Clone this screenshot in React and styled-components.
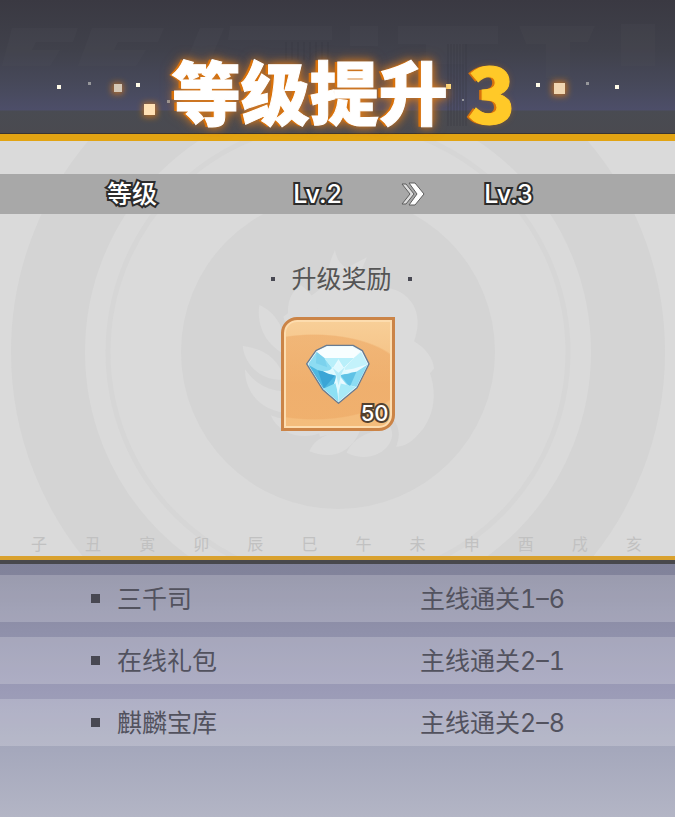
import React from 'react';
import styled, { createGlobalStyle } from 'styled-components';

const GlobalStyle = createGlobalStyle`
  * {
    box-sizing: border-box;
  }
  body {
    margin: 0;
    background: #b3b5c5;
    font-family: Inter, 'Noto Sans CJK SC', sans-serif;
  }
  h1, h2, p, ul {
    margin: 0;
    padding: 0;
    font-weight: 400;
    list-style: none;
  }
`

const Page = styled.main`
  display: flex;
  flex-direction: column;
  min-height: 100vh;
`

const Backdrop = styled.svg`
  position: absolute;
  inset: 0;
  width: 100%;
  height: 100%;
`

const Header = styled.header`
  position: relative;
  height: 141px;
  border-bottom: 7px solid #e2a413;
  box-shadow: inset 0 -1px 0 #3a3530;
  background: linear-gradient(#3a3942 0, #40414b 50px, #484a5d 90px, #4d4e69 110px, #494b52 111px, #4a4a50 134px);
`

const Title = styled.h1`
  position: relative;
  display: flex;
  justify-content: center;
  align-items: center;
  gap: 20px;
  padding-top: 50px;
  padding-left: 12px;
  font-family: 'Noto Sans CJK SC', sans-serif;
  font-size: 69px;
  font-weight: 900;
  line-height: 80px;
  color: #fff;
  -webkit-text-stroke: 1px #fff;
  text-shadow: -3px 0 0 #d8720c, 0 0 8px #e07d1c, 0 0 14px rgba(226, 126, 20, 0.7);
`

const TitleLevel = styled.span`
  font-size: 78px;
  color: #ffc928;
  -webkit-text-stroke: 1px #ffc928;
  text-shadow: -3px 0 0 #d8720c, 0 0 6px rgba(216, 114, 12, 0.4);
`

const Panel = styled.section`
  position: relative;
  padding: 33px 0 2px;
  background: #dadada;
  border-bottom: 4px solid #d9a12e;
`

const LevelBar = styled.div`
  position: relative;
  display: grid;
  grid-template-columns: 264fr 107fr 84fr 107fr 113fr;
  align-items: center;
  justify-items: center;
  height: 40px;
  background: #a8a8a8;
`

const Outlined = styled.span`
  font-size: ${(props) => props.$size || 25}px;
  font-weight: 500;
  line-height: 30px;
  color: #fff;
  -webkit-text-stroke: 4px ${(props) => props.$stroke || '#2c2c2c'};
  paint-order: stroke fill;
`

const RewardTitle = styled.h2`
  position: relative;
  display: flex;
  justify-content: center;
  align-items: center;
  gap: 16px;
  margin-top: 50px;
  padding-left: 8px;
  font-size: 25px;
  line-height: 30px;
  color: #555;
`

const Square = styled.span`
  width: ${(props) => props.$size}px;
  height: ${(props) => props.$size}px;
  background: #484852;
`

const RewardBox = styled.div`
  position: relative;
  display: flex;
  align-items: center;
  justify-content: center;
  width: 114px;
  height: 114px;
  margin: 23px auto 0;
  border: 3px solid #cb8447;
  border-radius: 16px 0 16px 0;
  background:
    radial-gradient(ellipse 92px 43px at 30px 57px, rgba(236, 166, 98, 0.55) 97%, transparent 100%),
    linear-gradient(#f8cf98, #f3bb7c 60%, #f4bd7c);
  box-shadow: inset 0 0 0 2px #fddcae;
`

const Count = styled.span`
  position: absolute;
  right: 3px;
  bottom: 0;
`

const Branches = styled.ul`
  position: relative;
  display: grid;
  grid-template-columns: repeat(12, 1fr);
  margin-top: 103px;
  padding: 0 14px 0 12px;
  font-size: 16px;
  line-height: 20px;
  text-align: center;
  color: #c1c1c1;
`

const Unlocks = styled.ul`
  flex: 1;
  display: flex;
  flex-direction: column;
  gap: 15px;
  padding: 11px 0 70px;
  border-top: 4px solid #48484c;
  background: linear-gradient(#80829a 0, #82839b 11px, #8f90aa 66px, #9b9bb7 128px, #a5a8bc 186px, #b3b5c5 253px);
`

const UnlockRow = styled.li`
  display: grid;
  grid-template-columns: 26px 303fr 255fr;
  align-items: center;
  height: 47px;
  padding-left: 91px;
  font-size: 25px;
  font-variant-numeric: tabular-nums;
  line-height: 30px;
  color: #52525e;
  background: rgba(255, 255, 255, 0.2);
`

const branches = ['子', '丑', '寅', '卯', '辰', '巳', '午', '未', '申', '酉', '戌', '亥'];

const unlocks = [
  { name: '三千司', condition: '主线通关1–6' },
  { name: '在线礼包', condition: '主线通关2–1' },
  { name: '麒麟宝库', condition: '主线通关2–8' }
];

const HeaderArt = () => (
  <Backdrop viewBox="0 0 675 134" preserveAspectRatio="xMidYMid slice" aria-hidden="true">
    <defs>
      <filter id="spark" x="-100%" y="-100%" width="300%" height="300%">
        <feGaussianBlur stdDeviation="3" />
      </filter>
    </defs>
    {/* worn lettering behind the title */}
    <g fill="#55565f" opacity="0.14">
      <path d="M12 28h66l-5 14H36l-4 8h28l-10 16H2z" />
      <path d="M92 28h72l-6 14h-40l-4 8h32l-10 16H78z" />
      <path d="M200 28h24l-16 38h-24z" />
      <path d="M230 26h102v14H228zM350 26h28v20h-28z" />
      <path d="M398 26h100v18h-34v20h-38V44h-28z" />
      <path d="M519 26h76l-7 16h-18v36h-24V44h-20zM621 24h34v42h-34z" />
    </g>
    {/* scan lines round the level number */}
    <g stroke="#363740" strokeWidth="1" opacity="0.5">
      {[286, 292, 298, 304, 310, 316, 322, 328].map((x) => (
        <path key={x} d={`M${x} 42v18`} />
      ))}
      {[448, 451, 454, 457, 460, 463, 466].map((x) => (
        <path key={x} d={`M${x} 44v82`} />
      ))}
    </g>
    <g fill="#d5791f" opacity="0.8" filter="url(#spark)">
      <path d="M112 83h11v11h-11zM143 103h14v14h-14zM552 81h15v15h-15z" />
    </g>
    <path fill="#d6c8b6" d="M114 84h8v8h-8z" />
    <path fill="#ffe0b5" d="M144 104h11v11h-11z" />
    <path fill="#f1d6b1" d="M554 83h11v11h-11z" />
    <path fill="#fffbe8" d="M57 85h4v4h-4zM136 83h4v4h-4zM536 83h4v4h-4zM615 85h4v4h-4z" />
    <path fill="#96979b" d="M88 82h3v3h-3zM167 100h3v3h-3zM586 82h3v3h-3zM462 99h2v2h-2z" />
    <path fill="#ffe38a" d="M446 84h5v5h-5z" />
  </Backdrop>
)

const PanelArt = () => (
  <Backdrop viewBox="0 141 675 415" preserveAspectRatio="xMidYMid slice" aria-hidden="true">
    <g fill="none" stroke="#d4d4d4">
      <circle cx="338" cy="352" r="290" strokeWidth="74" />
      <circle cx="338" cy="352" r="230" strokeWidth="5" stroke="#d6d6d6" />
    </g>
    <circle cx="338" cy="352" r="157" fill="#d4d4d4" />
    <g transform="translate(220 250) scale(0.3333)" fill="#dbdbdb">
      <path d="M330 95C318 60 330 35 345 0c4 25 14 40 34 54l62-32-22 50 5 42c60-10 122 0 148 40 26 32 26 78 10 120 34 20 58 50 60 82l-12 14c22 60 14 140-42 190-16 18-38 30-60 30 14-30 10-64-10-84L300 560 190 200z" />
      <path d="M205 200c-6-40 10-80 38-94 40 30 54 58 50 110z" />
      <path d="M118 165c50 22 80 72 82 150-54-22-92-80-82-150z" />
      <path d="M68 288c60 8 106 34 126 100-58 8-118-32-126-100z" />
      <path d="M75 358c36 50 76 64 118 66v64c-66-8-118-56-118-130z" />
      <path d="M152 496c60 24 110 16 180 36-60 46-152 30-180-36z" />
      <path d="M268 604c20-50 80-62 154-68-24 70-86 96-154 68z" />
      <path d="M380 608c20-44 60-62 132-76 24 54-52 116-132 76z" />
    </g>
  </Backdrop>
)

const Chevrons = () => (
  <svg width="24" height="24" viewBox="0 0 24 24" role="img" aria-label="升至" strokeLinejoin="round">
    <path d="M1 2h4l8 10-8 10H1l8-10z" fill="#dedede" stroke="#5d5d5d" strokeWidth="1" />
    <path d="M8 1h6l9 11-9 11H8l8-11z" fill="#fff" stroke="#5d5d5d" strokeWidth="1" />
  </svg>
)

const Diamond = () => (
  <svg width="67" height="63" viewBox="105 115 200 190" role="img" aria-label="钻石">
    <path d="M112 178l28-40 32-16h80l28 16 20 40-36 72-56 47-48-42z" fill="#eafaff" stroke="#687b91" strokeWidth="4" strokeLinejoin="round" />
    <path d="M117 178l25-36 24 18 30 40-62 4z" fill="#8ddcf2" />
    <path d="M142 140l32-14h74l26 14-20 22h-90z" fill="#f7feff" />
    <path d="M164 160h90l-30 30-16-26-18 28z" fill="#b8effa" />
    <path d="M142 142l24 18 8 28-34-12z" fill="#7bd2ed" />
    <path d="M276 142l20 37-44 14-32 5 34-38z" fill="#c3f2fb" />
    <path d="M118 181l28 16 58 12-14 42-28 1z" fill="#4fb8e0" />
    <path d="M146 198l56 10-38 44z" fill="#3aa5d6" />
    <path d="M208 210l54-8 34-22-34 68-30-8z" fill="#8cdcf3" />
    <path d="M214 212l48-10-20 46z" fill="#5fc2e6" />
    <path d="M162 253l40-18 6 58z" fill="#8ce0f4" />
    <path d="M208 236l52 12-52 44z" fill="#a8eaf8" />
    <path d="M208 163c2 18 7 25 19 25-1 9 6 15 20 17-18 5-27 3-33 8l1 25-8 30-8-30 1-25c-10-2-22-3-40-14 16 2 26-2 29-11 10 0 16-9 19-25z" fill="#e0faff" />
    <path d="M190 190l18 15 19-17-11 23-8 32-7-32z" fill="#b8edfa" />
  </svg>
)

const App = () => (
  <>
    <GlobalStyle />
    <Page>
      <Header>
        <HeaderArt />
        <Title>
          等级提升
          <TitleLevel>3</TitleLevel>
        </Title>
      </Header>
      <Panel>
        <PanelArt />
        <LevelBar>
          <Outlined>等级</Outlined>
          <Outlined>Lv.2</Outlined>
          <Chevrons />
          <Outlined>Lv.3</Outlined>
        </LevelBar>
        <RewardTitle>
          <Square $size={4} />
          升级奖励
          <Square $size={4} />
        </RewardTitle>
        <RewardBox>
          <Diamond />
          <Count>
            <Outlined $size={22} $stroke="#51402f">50</Outlined>
          </Count>
        </RewardBox>
        <Branches>
          {branches.map((branch) => (
            <li key={branch}>{branch}</li>
          ))}
        </Branches>
      </Panel>
      <Unlocks>
        {unlocks.map((unlock) => (
          <UnlockRow key={unlock.name}>
            <Square $size={9} />
            <span>{unlock.name}</span>
            <span>{unlock.condition}</span>
          </UnlockRow>
        ))}
      </Unlocks>
    </Page>
  </>
)

export default App;
